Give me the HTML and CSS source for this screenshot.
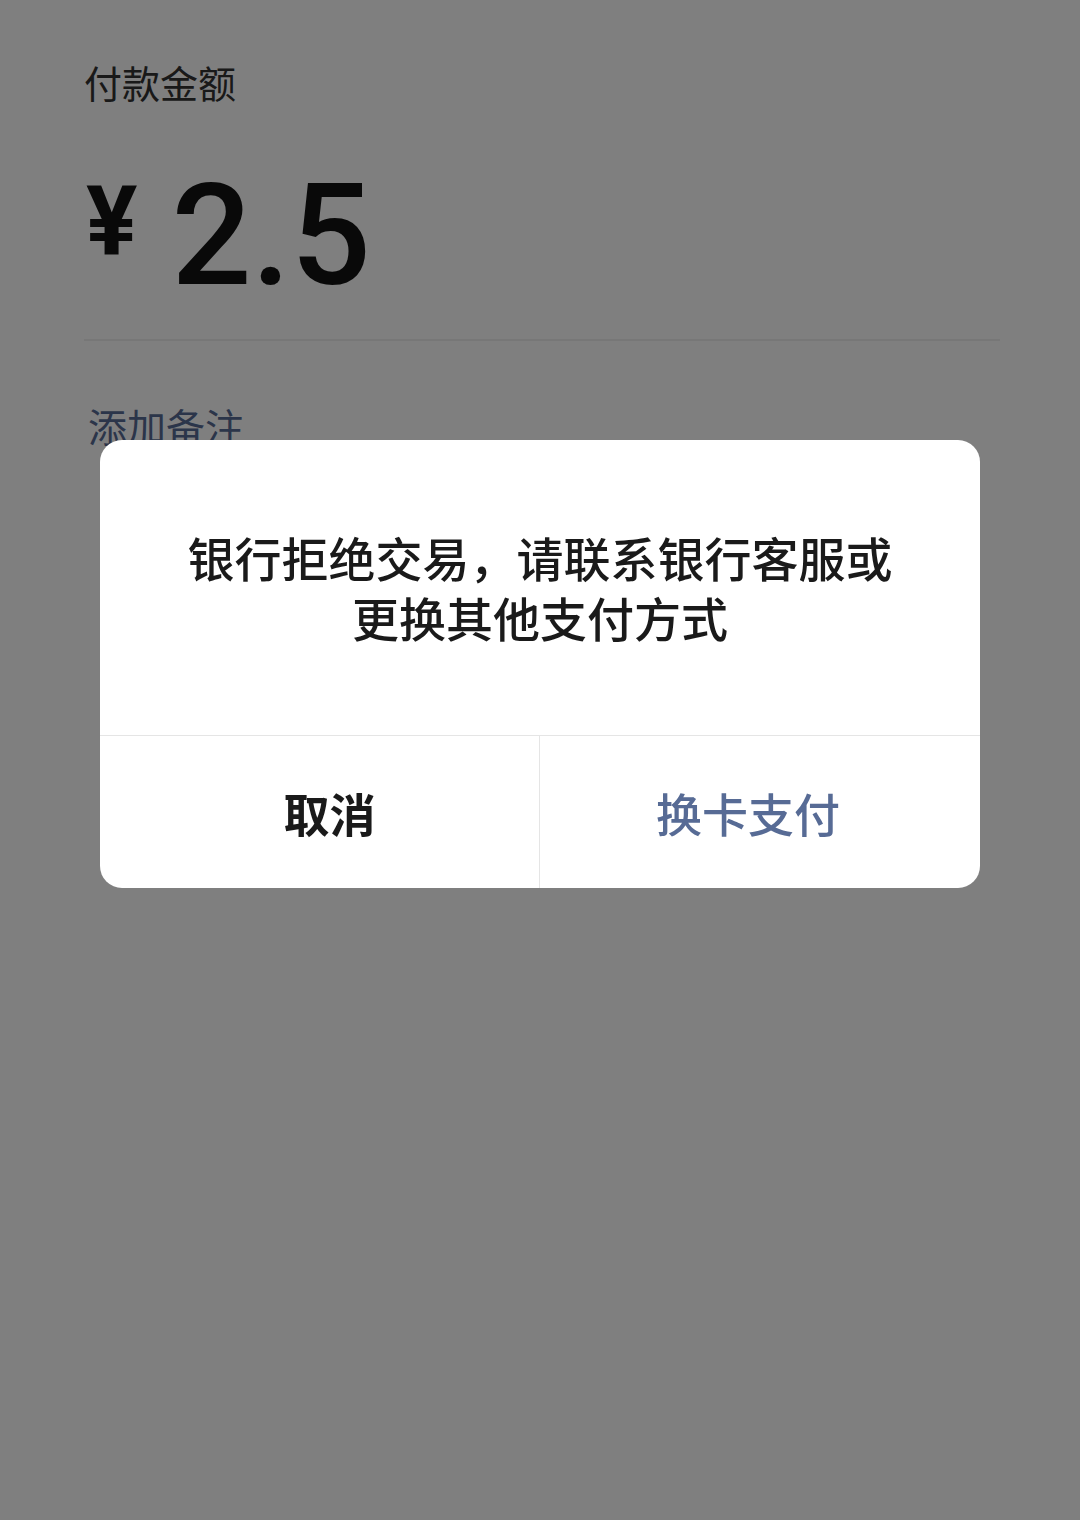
FILE: index.html
```html
<!DOCTYPE html>
<html lang="zh-CN">
<head>
  <meta charset="UTF-8" />
  <meta name="viewport" content="width=device-width, initial-scale=1.0" />
  <title>付款</title>
  <link rel="stylesheet" href="styles.css">
</head>
<body>

<div class="page">
  <div class="label">付款金额</div>
  <div class="amount">
    <span class="currency">¥</span>
    <span class="value">2.5</span>
  </div>
  <div class="divider"></div>
  <a class="remark" href="#">添加备注</a>
</div>

<!-- modal mask + dialog -->
<div class="mask">
  <div class="dialog">
    <div class="dialog-body">
      <p class="msg-line">银行拒绝交易，请联系银行客服或</p>
      <p class="msg-line">更换其他支付方式</p>
    </div>
    <div class="dialog-actions">
      <button class="btn btn-cancel">取消</button>
      <button class="btn btn-primary">换卡支付</button>
    </div>
  </div>
</div>

</body>
</html>
```

FILE: styles.css
```css
body {
  margin: 0;
  background: #ffffff;
  font-family: "Noto Sans CJK SC", "Noto Sans", sans-serif;
  color: #333;
}

.page {
  padding: 56px 80px 0 84px;
}

.label {
  font-size: 38px;
  line-height: 52px;
  color: #333;
}

/* --- amount row --- */
.amount {
  display: flex;
  align-items: flex-start;
  margin-top: 58px;
  height: 155px;
  color: #121212;
}

.currency {
  font-family: Roboto, "Liberation Sans", sans-serif;
  font-weight: 700;
  font-size: 96px;
  line-height: 1;
  margin-top: 7px;
  margin-left: 2px;
}

.value {
  font-family: Roboto, "Liberation Sans", sans-serif;
  font-weight: 500;
  font-size: 141px;
  line-height: 1;
  margin-left: 34px;
  margin-top: -1px;
}

.divider {
  border-top: 2px solid #eeeeee;
  margin: 18px 0 0 0;
}

.remark {
  display: inline-block;
  margin-top: 58px;
  margin-left: 4px;
  font-size: 39px;
  line-height: 52px;
  color: #576b95;
  text-decoration: none;
}

/* --- mask & dialog --- */
.mask {
  position: fixed;
  top: 0;
  left: 0;
  right: 0;
  bottom: 0;
  background: rgba(0, 0, 0, 0.5);
}

.dialog {
  width: 880px;
  margin: 440px auto 0;
  background: #ffffff;
  border-radius: 22px;
  overflow: hidden;
}

.dialog-body {
  display: flex;
  flex-direction: column;
  gap: 6px;
  padding: 90px 20px 91px;
  text-align: center;
  font-size: 47px;
  font-weight: 500;
  line-height: 54px;
  color: #1a1a1a;
}

.msg-line {
  margin: 0;
}

.dialog-actions {
  display: flex;
  border-top: 1px solid #e5e5e5;
  height: 152px;
}

.btn {
  flex: none;
  width: 50%;
  box-sizing: border-box;
  border: none;
  background: transparent;
  font-family: "Noto Sans CJK SC", sans-serif;
  font-size: 46px;
  font-weight: 500;
  cursor: pointer;
}

.btn-cancel {
  color: #1a1a1a;
  font-weight: 700;
  padding-left: 26px;
  border-right: 1px solid #e5e5e5;
}

.btn-primary {
  color: #576b95;
  padding-right: 30px;
}
```
